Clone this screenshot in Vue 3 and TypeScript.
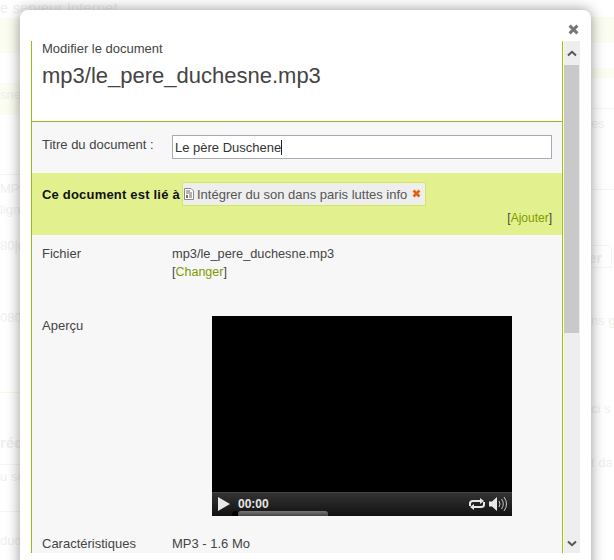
<script setup lang="ts">
interface BackRow { h: number; text?: string; cls?: string }
const leftRows: BackRow[] = [
  { h: 18, text: 'e serveur Internet', cls: 'top' },
  { h: 35, cls: 'yellow' },
  { h: 30 },
  { h: 32, text: 'sne.', cls: 'yellow pt' },
  { h: 15 },
  { h: 45, cls: 'line-b' },
  { h: 6 },
  { h: 21, text: 'MP3' },
  { h: 36, text: 'ligne' },
  { h: 72, text: '80|c' },
  { h: 83, text: '080|', cls: 'pale-b' },
  { h: 42 },
  { h: 30, text: 'réd', cls: 'bold line-b' },
  { h: 47, text: 'u so', cls: 'line-b pt' },
  { h: 21 },
  { h: 27, text: 'duc' }
]
const rightRows: BackRow[] = [
  { h: 17 },
  { h: 26, cls: 'yellow' },
  { h: 25 },
  { h: 10, cls: 'yellow' },
  { h: 31, cls: 'line-b' },
  { h: 7 },
  { h: 74, text: 'es', cls: 'line-b' },
  { h: 55 },
  { h: 23, text: 'er', cls: 'bold pt btn' },
  { h: 45 },
  { h: 88, text: 'ns g' },
  { h: 54, text: 'ci s' },
  { h: 105, text: 't da' }
]
</script>

<template>
  <div class="page">
    <div class="backdrop">
      <div class="back-col">
        <div v-for="(r, i) in leftRows" :key="i" class="back-row" :class="r.cls" :style="{ height: r.h + 'px' }">
          <span>{{ r.text }}</span>
        </div>
      </div>
      <div class="back-col right">
        <div v-for="(r, i) in rightRows" :key="i" class="back-row" :class="r.cls" :style="{ height: r.h + 'px' }">
          <span>{{ r.text }}</span>
        </div>
      </div>
    </div>

    <div class="modal">
      <svg class="close" width="11" height="11" viewBox="0 0 11 11" aria-label="Fermer">
        <path d="M1.6 1.6 9.4 9.4M9.4 1.6 1.6 9.4" stroke="#777" stroke-width="3" fill="none" />
      </svg>
      <div class="body">
        <div class="frame">
          <header class="head">
            <div class="subtitle">Modifier le document</div>
            <h1>mp3/le_pere_duchesne.mp3</h1>
          </header>
          <div class="content">
            <div class="title-row">
              <label>Titre du document :</label>
              <div class="input"><span>Le père Duschene</span><i class="caret"></i></div>
            </div>
            <section class="linked">
              <div class="linked-top">
                <strong>Ce document est lié à</strong>
                <span class="tag">
                  <svg width="10" height="12" viewBox="0 0 10 12">
                    <path d="M.5.5h6.500l2.500 2.500v8.500H.5z" fill="#fff" stroke="#8a8a8a" />
                    <path d="M2 3h4M2 5h6M5 7h3M5 9h3" stroke="#666" />
                    <rect x="2" y="7" width="2" height="3" fill="#8b6a3a" />
                  </svg>
                  <span>Intégrer du son dans paris luttes info</span>
                  <svg class="tag-x" width="9" height="9" viewBox="0 0 9 9">
                    <path d="M1.500 1.500l6 6M7.500 1.500l-6 6" stroke="#e8600f" stroke-width="2.600" fill="none" />
                  </svg>
                </span>
              </div>
              <div class="add">[<a>Ajouter</a>]</div>
            </section>
            <div class="row file">
              <div class="label">Fichier</div>
              <div>
                <div class="file-name">mp3/le_pere_duchesne.mp3</div>
                <div class="change">[<a>Changer</a>]</div>
              </div>
            </div>
            <div class="row preview">
              <div class="label">Aperçu</div>
              <div class="video">
                <div class="controls">
                  <svg class="play" width="12" height="14" viewBox="0 0 12 14"><path d="M0 0 12 7 0 14z" fill="#e8e8e8" /></svg>
                  <span class="time">00:00</span>
                  <svg class="repeat" width="18" height="14" viewBox="0 0 18 14">
                    <path d="M2 9V6.500Q2 4 5 4h8M16 5v2.500Q16 10 13 10H5" stroke="#e8e8e8" stroke-width="2" fill="none" />
                    <path d="M12 1l4 3-4 3zM6 7l-4 3 4 3z" fill="#e8e8e8" />
                  </svg>
                  <svg class="volume" width="18" height="16" viewBox="0 0 18 16">
                    <path d="M0 5.500h3L8 1v14L3 10.500H0z" fill="#e8e8e8" />
                    <path d="M10 5q2 3 0 6M12.500 3q3.500 5 0 10M15 1q5 7 0 14" stroke="#ccc" fill="none" />
                  </svg>
                  <i class="dot"></i>
                  <i class="progress"></i>
                </div>
              </div>
            </div>
            <div class="row specs">
              <div class="label">Caractéristiques</div>
              <div>MP3 - 1.6 Mo</div>
            </div>
          </div>
        </div>
        <div class="scrollbar">
          <div class="arrow">
            <svg width="10" height="7" viewBox="0 0 10 7"><path d="M1 5.500 5 1.800 9 5.500" stroke="#555" stroke-width="2" fill="none" /></svg>
          </div>
          <div class="track"><div class="thumb"></div></div>
          <div class="arrow down">
            <svg width="10" height="7" viewBox="0 0 10 7"><path d="M1 1.500 5 5.200 9 1.500" stroke="#555" stroke-width="2" fill="none" /></svg>
          </div>
        </div>
      </div>
    </div>
  </div>
</template>

<style>
html, body { margin: 0; background: #fff; overflow: hidden; }
</style>

<style scoped>
.page {
  position: relative;
  width: 614px;
  height: 560px;
  overflow: hidden;
  background: #fff;
  font-family: "Liberation Sans", Arial, sans-serif;
  font-size: 13px;
  color: #444;
}
.backdrop {
  display: grid;
  grid-template-columns: 307px 307px;
  height: 560px;
}
.back-col { display: flex; flex-direction: column; }
.back-row {
  display: flex;
  align-items: flex-start;
  box-sizing: border-box;
  font-size: 13px;
  line-height: 15px;
  color: #efefef;
  white-space: nowrap;
  overflow: hidden;
}
.back-col.right .back-row { justify-content: flex-end; }
.back-col.right .back-row span { width: 25px; margin-right: -2px; }
.top { font-size: 15px; }
.yellow { background: #fbfdf0; }
.pt { padding-top: 4px; }
.line-b { border-bottom: 1px solid #f4f4f4; }
.pale-b { border-bottom: 1px solid #f8fae0; }
.bold { font-weight: bold; font-size: 15px; }
.btn { border: 1px solid #f4f4f4; border-radius: 4px 4px 0 0; margin-right: 2px; }

.modal {
  position: absolute;
  left: 20px;
  top: 10px;
  width: 571px;
  height: 620px;
  box-sizing: border-box;
  padding: 31px 11px 0;
  background: #fff;
  border-radius: 8px;
  box-shadow: 0 0 14px rgba(0, 0, 0, 0.42);
}
.close { position: absolute; right: 12px; top: 14px; }
.body { display: flex; gap: 1px; height: 512px; }
.frame {
  width: 532px;
  box-sizing: border-box;
  border-left: 1px solid #a2b41e;
  border-right: 1px solid #a9c400;
  overflow: hidden;
}
.head {
  height: 81px;
  box-sizing: border-box;
  padding-left: 10px;
  border-bottom: 1px solid #a2b41e;
}
.subtitle { line-height: 15px; }
h1 {
  margin: 7px 0 0;
  font-size: 22px;
  line-height: 26px;
  font-weight: normal;
}
.content { background: #f7f7f7; height: 520px; }
.title-row {
  display: flex;
  padding: 13px 10px 14px;
}
.title-row label { width: 130px; line-height: 19px; }
.input {
  width: 380px;
  height: 24px;
  box-sizing: border-box;
  border: 1px solid #aaaab6;
  background: #fff;
  display: flex;
  align-items: center;
  padding-left: 2px;
  color: #333;
}
.caret { width: 1px; height: 15px; background: #222; }
.linked {
  height: 62px;
  box-sizing: border-box;
  background: #e2f18e;
  padding: 9px 10px 0;
}
.linked-top { display: flex; align-items: center; }
.linked-top strong { color: #111; width: 140px; letter-spacing: 0.2px; flex: none; }
.tag {
  display: inline-flex;
  align-items: center;
  height: 24px;
  width: 244px;
  box-sizing: border-box;
  padding-left: 1px;
  background: #eee;
  border: 1px solid #d3e85a;
  color: #555;
  gap: 3px;
  white-space: nowrap;
}
.tag-x { margin-left: 2px; margin-bottom: 2px; }
.add { text-align: right; margin-top: 5px; line-height: 14px; font-size: 12px; }
a { color: #7f9a00; }
.row { display: flex; padding-left: 10px; }
.row .label { width: 130px; }
.file { height: 73px; padding-top: 10px; box-sizing: border-box; line-height: 18px; }
.file-name { font-size: 12.8px; }
.change { font-size: 12.5px; }
.preview { height: 225px; padding-top: 8px; box-sizing: border-box; }
.preview .label { padding-top: 2px; width: 170px; line-height: 15px; }
.video {
  position: relative;
  width: 300px;
  height: 200px;
  background: #000;
  display: flex;
  align-items: flex-end;
}
.controls {
  position: relative;
  flex: 1;
  height: 24px;
  box-sizing: border-box;
  border-top: 1px solid #444;
  background: linear-gradient(#333, #111);
  display: flex;
  align-items: center;
  padding: 0 5px 0 6px;
  overflow: hidden;
}
.play { margin-right: 8px; margin-bottom: 1px; }
.time { color: #e6e6e6; font-weight: bold; font-size: 12px; flex: 1; margin-bottom: 1px; }
.repeat { margin-right: 3px; margin-bottom: 1px; }
.volume { margin-bottom: 2px; }
.dot {
  position: absolute;
  left: 20px;
  bottom: -2px;
  width: 7px;
  height: 7px;
  border-radius: 50%;
  background: #000;
}
.progress {
  position: absolute;
  left: 26px;
  bottom: 0;
  width: 90px;
  height: 5px;
  border-radius: 3px 3px 0 0;
  background: linear-gradient(#777, #444);
}
.specs { padding-top: 3px; line-height: 15px; }
.scrollbar {
  width: 16px;
  background: #eee;
  display: flex;
  flex-direction: column;
}
.arrow { height: 24px; display: flex; align-items: center; justify-content: center; flex: none; }
.arrow.down { height: 20px; }
.track { flex: 1; }
.thumb { width: 15px; height: 268px; background: #c9c9c9; }
</style>
